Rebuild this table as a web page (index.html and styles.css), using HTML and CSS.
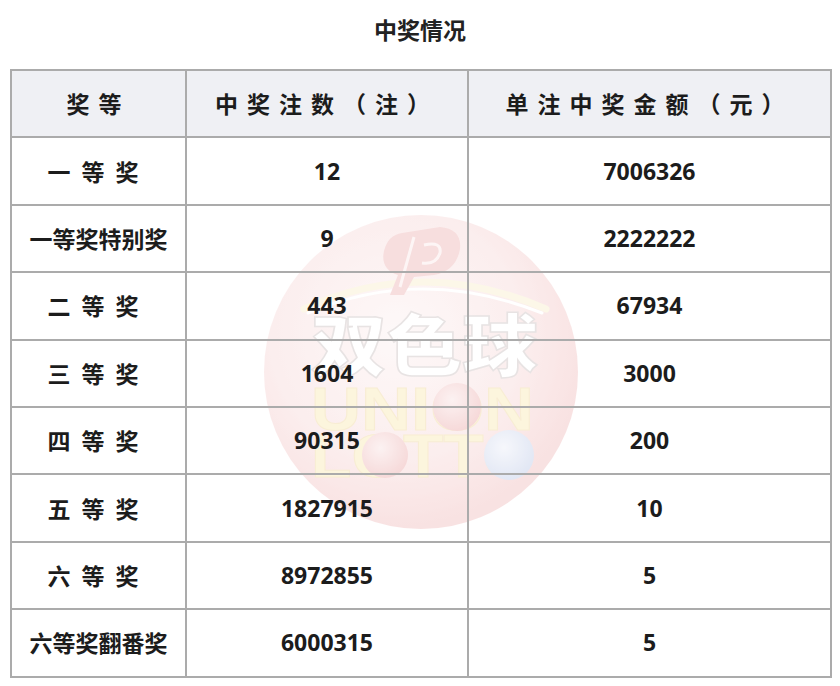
FILE: index.html
```html
<!DOCTYPE html>
<html lang="zh-CN">
<head>
<meta charset="utf-8">
<title>中奖情况</title>
<link rel="stylesheet" href="styles.css">
</head>
<body>
<h1 class="title">中奖情况</h1>
<div class="board">
  <svg class="watermark" viewBox="0 0 314 314" width="314" height="314" aria-hidden="true">
    <defs>
      <radialGradient id="g" cx="0.42" cy="0.38" r="0.62">
        <stop offset="0" stop-color="#fdf5f5"/>
        <stop offset="0.65" stop-color="#fae3e3"/>
        <stop offset="1" stop-color="#f5cfcf"/>
      </radialGradient>
      <radialGradient id="rb" cx="0.4" cy="0.35" r="0.65">
        <stop offset="0" stop-color="#fbeaea"/>
        <stop offset="1" stop-color="#f1c1c1"/>
      </radialGradient>
      <radialGradient id="bb" cx="0.4" cy="0.35" r="0.65">
        <stop offset="0" stop-color="#f1f3fa"/>
        <stop offset="1" stop-color="#cfd8ee"/>
      </radialGradient>
    </defs>
    <circle cx="157" cy="157" r="157" fill="url(#g)"/>
    <path d="M40 94 Q157 40 282 94" fill="none" stroke="#fbf2da" stroke-width="7" stroke-linecap="round"/>
    <path d="M44 98 Q157 50 278 98" fill="none" stroke="#ffffff" stroke-width="3" stroke-linecap="round"/>
    <path d="M138 18 L176 12 Q198 14 196 34 Q192 56 170 60 L150 62 L140 80 L126 80 L134 60 Q116 54 120 36 Q124 20 138 18 Z" fill="#f3c9c9"/>
    <path d="M150 22 L136 72 M160 30 Q178 26 176 38 Q172 50 158 48" fill="none" stroke="#fdf0f0" stroke-width="3"/>
    <text class="wm-cn" x="47" y="156" textLength="227" lengthAdjust="spacingAndGlyphs">双色球</text>
    <text class="wm-en" x="47" y="215" textLength="223" lengthAdjust="spacingAndGlyphs">UNION</text>
    <text class="wm-en" x="47" y="262" textLength="223" lengthAdjust="spacingAndGlyphs">LOTTO</text>
    <circle cx="193" cy="192" r="24" fill="url(#rb)"/>
    <circle cx="121" cy="240" r="23" fill="url(#rb)"/>
    <circle cx="245" cy="240" r="25" fill="url(#bb)"/>
  </svg>
  <table class="prizes">
    <colgroup>
      <col class="c1"><col class="c2"><col class="c3">
    </colgroup>
    <thead>
      <tr>
        <th class="sp">奖等</th>
        <th class="sp">中奖注数（注）</th>
        <th class="sp">单注中奖金额（元）</th>
      </tr>
    </thead>
    <tbody>
      <tr><td class="lbl">一等奖</td><td class="num">12</td><td class="num">7006326</td></tr>
      <tr><td>一等奖特别奖</td><td class="num">9</td><td class="num">2222222</td></tr>
      <tr><td class="lbl">二等奖</td><td class="num">443</td><td class="num">67934</td></tr>
      <tr><td class="lbl">三等奖</td><td class="num">1604</td><td class="num">3000</td></tr>
      <tr><td class="lbl">四等奖</td><td class="num">90315</td><td class="num">200</td></tr>
      <tr><td class="lbl">五等奖</td><td class="num">1827915</td><td class="num">10</td></tr>
      <tr><td class="lbl">六等奖</td><td class="num">8972855</td><td class="num">5</td></tr>
      <tr><td>六等奖翻番奖</td><td class="num">6000315</td><td class="num">5</td></tr>
    </tbody>
  </table>
</div>
</body>
</html>
```
FILE: styles.css
```css
html, body {
  margin: 0;
  padding: 0;
  background: #ffffff;
}
body {
  font-family: "Noto Sans CJK SC", "Noto Sans", sans-serif;
  color: #1c1c1c;
}
.title {
  margin: 14px 0 25px;
  font-size: 23px;
  line-height: 30px;
  font-weight: 700;
  text-align: center;
  color: #222;
}
.board {
  position: relative;
  margin: 0 10px;
}
.watermark {
  position: absolute;
  left: 254px;
  top: 146px;
  z-index: 0;
  opacity: 0.6;
  pointer-events: none;
}
.wm-cn {
  font-family: "Noto Sans CJK SC", sans-serif;
  font-weight: 900;
  font-size: 68px;
  fill: #ffffff;
  stroke: #d9d2d2;
  stroke-width: 1.5;
}
.wm-en {
  font-family: "Liberation Sans", sans-serif;
  font-weight: 700;
  font-size: 62px;
  fill: #fbefc8;
  stroke: #f4e2b8;
  stroke-width: 1;
}
.prizes {
  position: relative;
  z-index: 1;
  width: 820px;
  border-collapse: collapse;
  table-layout: fixed;
}
.c1 { width: 175px; }
.c2 { width: 282px; }
.c3 { width: 363px; }
.prizes th,
.prizes td {
  border: 2px solid #ababab;
  height: 65.4px;
  padding: 0;
  text-align: center;
  vertical-align: middle;
  font-size: 23px;
  font-weight: 700;
  line-height: 1;
}
.prizes thead th {
  background: #eff0f4;
}
.sp {
  letter-spacing: 9px;
}
.lbl {
  letter-spacing: 11px;
}
.num {
  font-family: "Open Sans", "Noto Sans", sans-serif;
  font-size: 25.5px;
  padding-left: 4px;
}
```
